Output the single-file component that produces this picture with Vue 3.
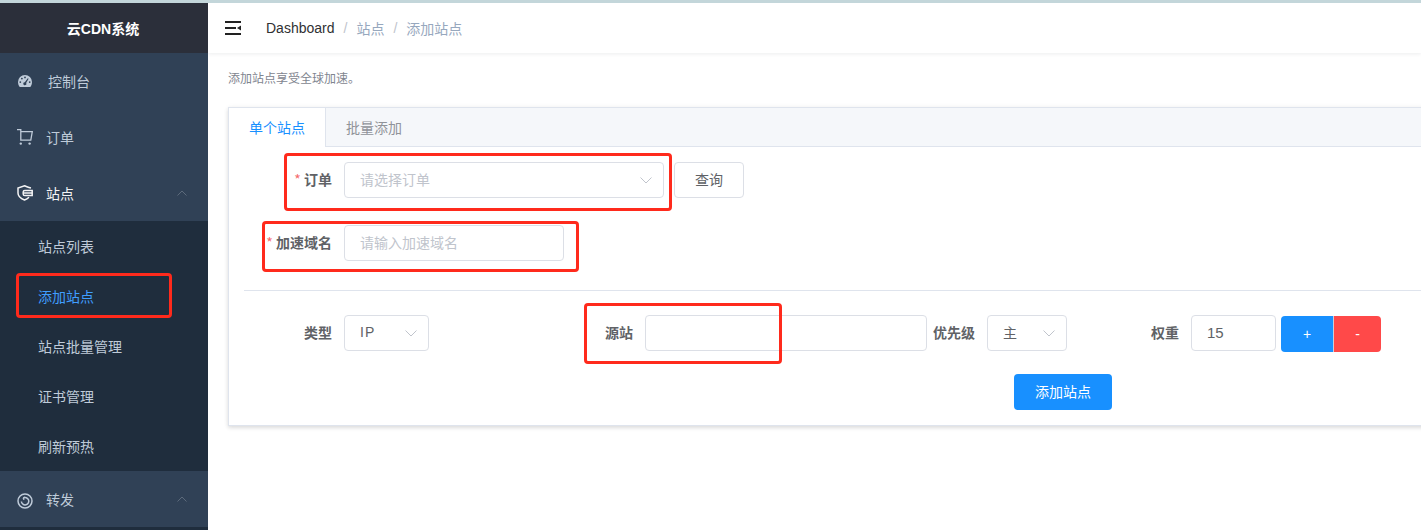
<script setup>
const subs = [
  { t: '站点列表' },
  { t: '添加站点', active: true },
  { t: '站点批量管理' },
  { t: '证书管理' },
  { t: '刷新预热' },
]
const marks = [
  { l: 284, t: 153, w: 388, h: 58 },
  { l: 262, t: 221, w: 317, h: 51 },
  { l: 584, t: 303, w: 198, h: 61 },
  { l: 16, t: 273, w: 156, h: 45 },
]
</script>

<template>
  <div class="page">
    <div class="topline"></div>
    <div class="shell">
      <aside class="side">
        <div class="logo">云CDN系统</div>
        <div class="item">
          <svg class="ic dash" viewBox="0 0 14 12" width="14" height="12"><path fill="#bfcbd9" fill-rule="evenodd" d="M7 0a7 7 0 0 1 7 7c0 1.900-.6 3.600-1.700 5H1.700A7.500 7.500 0 0 1 0 7a7 7 0 0 1 7-7zM2.300 6.200a.9.9 0 1 0 0 1.800.9.9 0 0 0 0-1.800zM3.900 2.700a.9.9 0 1 0 0 1.800.9.9 0 0 0 0-1.800zM7 1.500a.9.9 0 1 0 0 1.800.9.9 0 0 0 0-1.800zM11.700 6.200a.9.9 0 1 0 0 1.800.9.9 0 0 0 0-1.800zM9.800 3.200 6.800 7.200a1.500 1.500 0 1 0 1.300.7l2.500-4.200z"/></svg>
          <span class="dash-t">控制台</span>
        </div>
        <div class="item">
          <svg class="ic" viewBox="0 0 16 16" width="16" height="16" fill="none" stroke="#bfcbd9" stroke-width="1.300"><path d="M0 .7h3.800V11.200H13.800L15.300 2.600H3.800"/><circle cx="3.800" cy="14.600" r="1.200" fill="#bfcbd9" stroke="none"/><circle cx="12.600" cy="14.600" r="1.200" fill="#bfcbd9" stroke="none"/></svg>
          <span>订单</span>
        </div>
        <div class="item open">
          <svg class="ic" viewBox="0 0 16 16" width="16" height="16" fill="none" stroke="#f4f4f5" stroke-width="1.500"><path d="M14 3C11.500 2.400 9.500 1.500 7.500.8L1 3v5c0 3 3 5.700 6.500 7 1.700-.6 3.300-1.600 4.500-2.800"/><path d="M15.200 5.400H7.800Q6.200 5.400 6.200 7V9Q6.200 10.600 7.800 10.600H15.200ZM6.500 8H15"/></svg>
          <span>站点</span>
          <svg class="up" viewBox="0 0 10 6" width="10" height="6" fill="none" stroke="#5c6a7b" stroke-width="1"><path d="M.5 5.500 5 1l4.500 4.500"/></svg>
        </div>
        <div class="subs">
          <div v-for="s in subs" :key="s.t" class="sub" :class="{ on: s.active }">{{ s.t }}</div>
        </div>
        <div class="item">
          <svg class="ic spiral" viewBox="0 0 16 16" width="16" height="16" fill="none" stroke="#bfcbd9" stroke-width="1.500"><circle cx="8" cy="8" r="7"/><path d="M6.200 5A3.700 3.700 0 1 1 4.400 8.500M6.200 5l1.800-.8M6.200 5l.8 1.700"/></svg>
          <span>转发</span>
          <svg class="up" viewBox="0 0 10 6" width="10" height="6" fill="none" stroke="#5c6a7b" stroke-width="1"><path d="M.5 5.500 5 1l4.500 4.500"/></svg>
        </div>
      </aside>

      <main class="main">
        <header class="head">
          <svg class="burger" viewBox="0 0 16 14" width="16" height="14" fill="#222"><path d="M0 0h16v2H0zM0 6h11v2H0zM0 12h16v2H0z"/><path d="M16 4.500v5L12 7z"/></svg>
          <nav class="crumb">
            <span class="dk">Dashboard</span><i>/</i><span>站点</span><i>/</i><span>添加站点</span>
          </nav>
        </header>

        <section class="body">
          <p class="tip">添加站点享受全球加速。</p>
          <div class="card">
            <div class="tabs">
              <div class="tab on">单个站点</div>
              <div class="tab">批量添加</div>
            </div>
            <div class="form">
              <div class="row r1">
                <label class="lab"><b>*</b> 订单</label>
                <div class="box w320 ph">请选择订单<svg class="chev" viewBox="0 0 12 7" width="12" height="7"><path d="M.5.500 6 6 11.500.5" fill="none" stroke="#c0c4cc"/></svg></div>
                <button class="btn">查询</button>
              </div>
              <div class="row r2">
                <label class="lab"><b>*</b> 加速域名</label>
                <div class="box w220 ph">请输入加速域名</div>
              </div>
              <div class="divider"></div>
              <div class="row r3">
                <label class="lab plain">类型</label>
                <div class="box w85 ip">IP<svg class="chev" viewBox="0 0 12 7" width="12" height="7"><path d="M.5.500 6 6 11.500.5" fill="none" stroke="#c0c4cc"/></svg></div>
                <label class="lab2 src">源站</label>
                <div class="box w282"></div>
                <label class="lab2 pri">优先级</label>
                <div class="box w80">主<svg class="chev" viewBox="0 0 12 7" width="12" height="7"><path d="M.5.500 6 6 11.500.5" fill="none" stroke="#c0c4cc"/></svg></div>
                <label class="lab2 wei">权重</label>
                <div class="box w85 num">15</div>
                <div class="pm"><button class="plus">+</button><button class="minus">-</button></div>
              </div>
              <div class="row r4"><button class="submit">添加站点</button></div>
            </div>
          </div>
        </section>
      </main>
    </div>
    <div v-for="(m, i) in marks" :key="i" class="mark" :style="{ left: m.l + 'px', top: m.t + 'px', width: m.w + 'px', height: m.h + 'px' }"></div>
  </div>
</template>

<style>
html, body { margin: 0; overflow: hidden; background: #fff; }
</style>

<style scoped>
.page { position: relative; width: 1421px; height: 530px; overflow: hidden; font-family: "Noto Sans CJK SC", "Liberation Sans", sans-serif; font-size: 14px; color: #606266; }
.topline { height: 3px; background: #c3d6da; }
.shell { display: flex; height: 527px; }
.side { width: 208px; flex: none; background: #1f2d3d; color: #bfcbd9; overflow: hidden; }
.logo { height: 50px; background: #2b2f3a; color: #fff; font-family: "Liberation Sans", "Noto Sans CJK SC", sans-serif; font-weight: 700; font-size: 14px; display: flex; align-items: center; justify-content: center; padding-right: 2px; box-sizing: border-box; }
.item { height: 56px; background: #304156; display: flex; align-items: center; padding-left: 17px; position: relative; }
.ic { width: 16px; margin-right: 13px; flex: none; }
.dash { width: 14px; margin-left: 1px; margin-right: 16px; }
.spiral { margin-top: 3px; }
.open { color: #f4f4f5; }
.up { position: absolute; left: 177px; top: 25px; }
.sub { height: 50px; line-height: 50px; padding-left: 38px; color: #bfcbd9; }
.sub.on { color: #409eff; }

.main { flex: 1; min-width: 0; background: #fff; overflow: hidden; }
.head { height: 50px; display: flex; align-items: center; box-shadow: 0 1px 4px rgba(0, 21, 41, .08); padding-left: 17px; position: relative; }
.burger { margin-right: 25px; }
.crumb { color: #97a8be; display: flex; align-items: center; }
.crumb .dk { color: #303133; font-family: "Liberation Sans", sans-serif; }
.crumb i { font-style: normal; margin: 0 9px; color: #c0c4cc; font-family: "Liberation Sans", sans-serif; }
.body { padding: 0 0 0 20px; }
.tip { margin: 0; padding-top: 16px; font-size: 12px; line-height: 17px; color: #7f858f; height: 38px; }
.card { width: 1300px; height: 319px; box-sizing: border-box; border: 1px solid #dfe4ed; box-shadow: 0 2px 4px rgba(0, 0, 0, .12), 0 0 6px rgba(0, 0, 0, .04); background: #fff; }
.tabs { display: flex; height: 39px; box-sizing: border-box; background: #f5f7fa; border-bottom: 1px solid #dfe4ed; }
.tab { width: 96px; height: 38px; line-height: 38px; text-align: center; color: #909399; font-size: 14px; border-right: 1px solid transparent; }
.tab.on { background: #fff; color: #1890ff; height: 39px; border-right-color: #dfe4ed; }
.form { position: relative; }
.row { display: flex; align-items: center; }
.r1 { margin-top: 15px; height: 36px; }
.r2 { margin-top: 27px; height: 36px; }
.r3 { margin-top: 24px; height: 36px; }
.r4 { margin-top: 23px; height: 36px; padding-left: 785px; }
.lab { width: 103px; text-align: right; font-weight: 700; color: #606266; margin-right: 12px; flex: none; white-space: nowrap; padding-bottom: 2px; }
.lab b { color: #f56c6c; font-weight: 400; }
.lab2 { font-weight: 700; color: #606266; flex: none; white-space: nowrap; padding-bottom: 2px; }
.src { margin-left: 176px; margin-right: 12px; }
.pri { margin-left: 6px; margin-right: 12px; }
.wei { margin-left: 84px; margin-right: 12px; }
.box { box-sizing: border-box; height: 36px; border: 1px solid #dcdfe6; border-radius: 4px; display: flex; align-items: center; padding-left: 15px; padding-bottom: 2px; position: relative; flex: none; color: #606266; }
.ph { color: #c0c4cc; }
.ip { letter-spacing: 1px; font-family: "Liberation Sans", sans-serif; }
.num { font-family: "Liberation Sans", sans-serif; font-size: 15px; }
.w320 { width: 320px; }
.w220 { width: 220px; }
.w85 { width: 85px; }
.w282 { width: 282px; }
.w80 { width: 80px; }
.chev { position: absolute; right: 11px; top: 14px; }
.btn { width: 70px; height: 36px; margin-left: 10px; border: 1px solid #dcdfe6; border-radius: 4px; background: #fff; color: #606266; font: inherit; padding: 0 0 2px; }
.pm { display: flex; margin-left: 5px; margin-top: 2px; }
.pm button { height: 36px; border: 0; color: #fff; font: 14px "Liberation Sans", sans-serif; padding: 0; }
.plus { width: 52px; background: #1890ff; border-radius: 4px 0 0 4px; }
.minus { width: 48px; background: #ff4949; border-radius: 0 4px 4px 0; border-left: 1px solid #c7d0dc !important; }
.submit { width: 98px; height: 36px; background: #1890ff; color: #fff; border: 0; border-radius: 4px; font: inherit; padding: 0 0 2px; }
.divider { height: 1px; background: #dfe4ed; margin: 29px 0 0 15px; }
.mark { position: absolute; box-sizing: border-box; border: 3px solid #ff2a1c; border-radius: 4px; pointer-events: none; }
</style>
